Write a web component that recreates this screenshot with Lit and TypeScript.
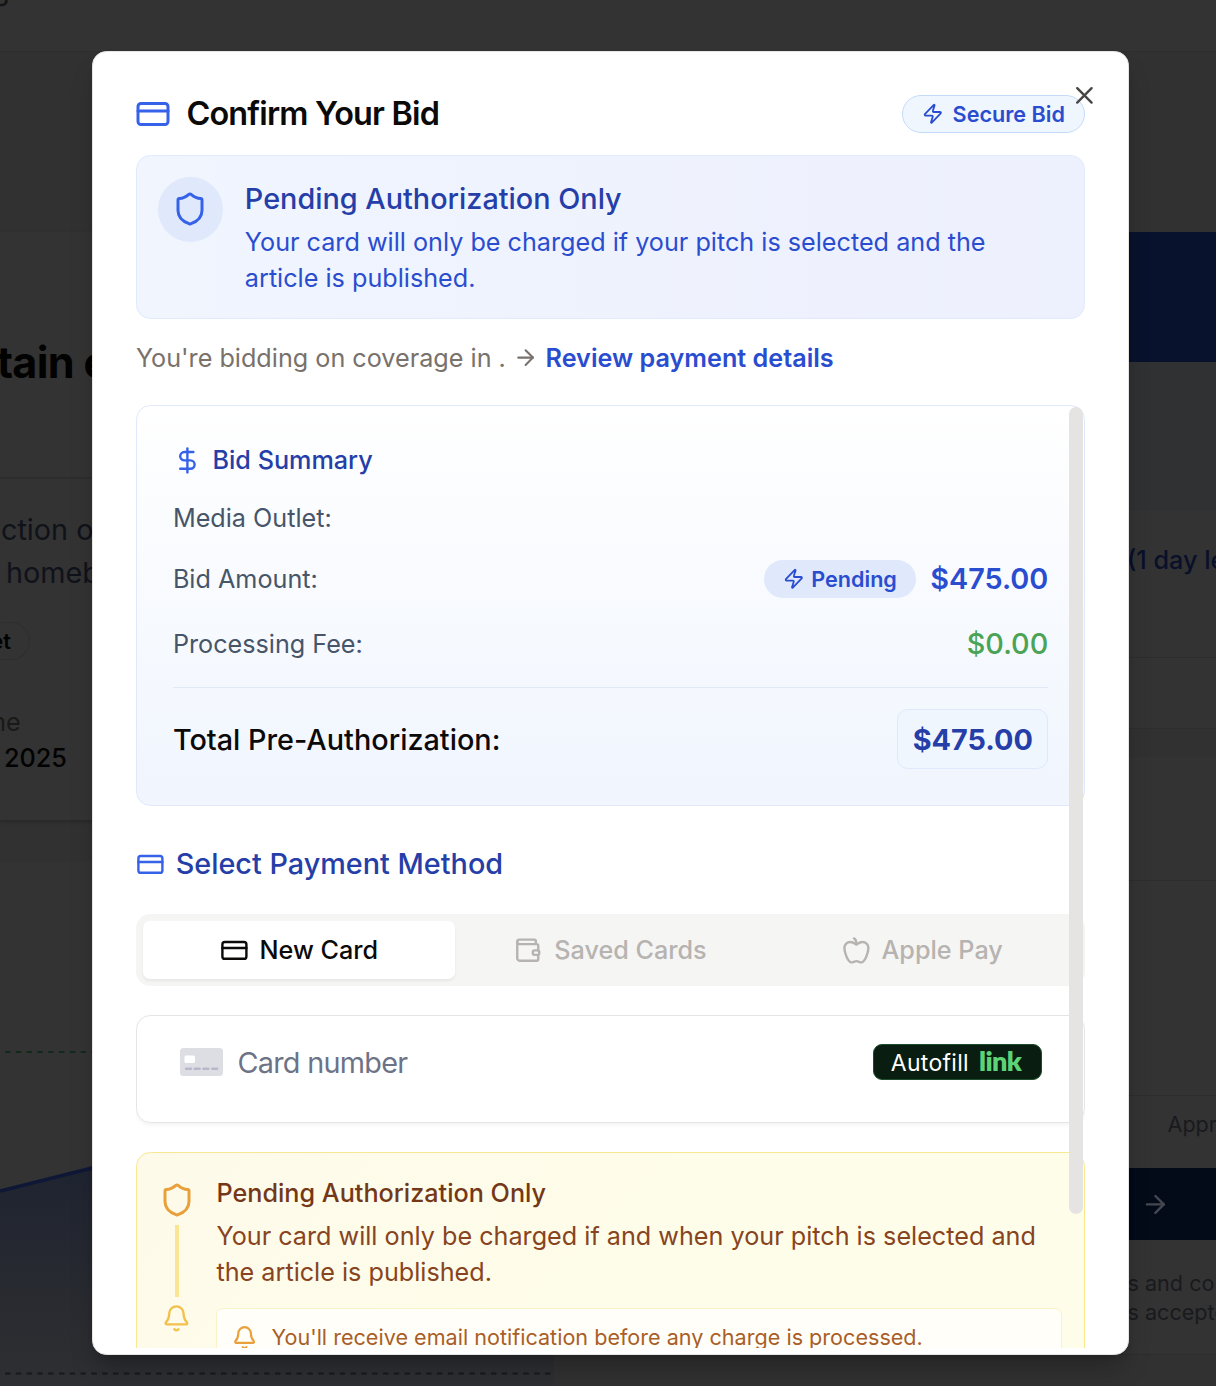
import { LitElement, html, css, svg, nothing } from "lit";
import { customElement, property } from "lit/decorators.js";

const ICONS: Record<string, unknown> = {
  card: svg`<rect width="20" height="14" x="2" y="5" rx="2"/><path d="M2 10h20"/>`,
  shield: svg`<path d="M20 13c0 5-3.5 7.5-7.66 8.95a1 1 0 0 1-.67-.01C7.5 20.5 4 18 4 13V6a1 1 0 0 1 1-1c2 0 4.5-1.2 6.24-2.72a1.17 1.17 0 0 1 1.52 0C14.51 3.81 17 5 19 5a1 1 0 0 1 1 1z"/>`,
  zap: svg`<path d="M4 14a1 1 0 0 1-.78-1.63l9.9-10.2a.5.5 0 0 1 .86.46l-1.92 6.02A1 1 0 0 0 13 10h7a1 1 0 0 1 .78 1.63l-9.9 10.2a.5.5 0 0 1-.86-.46l1.92-6.02A1 1 0 0 0 11 14z"/>`,
  x: svg`<path d="M18 6 6 18"/><path d="m6 6 12 12"/>`,
  arrow: svg`<path d="M5 12h14"/><path d="m12 5 7 7-7 7"/>`,
  dollar: svg`<path d="M12 2v20"/><path d="M17 5H9.5a3.5 3.5 0 0 0 0 7h5a3.5 3.5 0 0 1 0 7H6"/>`,
  wallet: svg`<path d="M18.200 6.800V4.200A1.200 1.200 0 0 0 17 3H4.600a1.900 1.900 0 0 0 0 3.800H19a1.200 1.200 0 0 1 1.200 1.200v4"/><path d="M2.700 5v13.600a2 2 0 0 0 2 2H19a1.200 1.200 0 0 0 1.200-1.200v-3.600"/><rect x="15.700" y="12" width="5.300" height="3.700" rx="1.300"/>`,
  apple: svg`<path d="M12 20.94c1.5 0 2.75 1.06 4 1.06 3 0 6-8 6-12.22A4.91 4.91 0 0 0 17 5c-2.22 0-4 1.44-5 2-1-.56-2.78-2-5-2a4.9 4.9 0 0 0-5 4.78C2 14 5 22 8 22c1.25 0 2.5-1.06 4-1.06Z"/><path d="M10 2c1 .5 2 2 2 5"/>`,
  bell: svg`<path d="M10.27 21a2 2 0 0 0 3.46 0"/><path d="M3.26 15.33A1 1 0 0 0 4 17h16a1 1 0 0 0 .74-1.67C19.41 13.96 18 12.5 18 8A6 6 0 0 0 6 8c0 4.5-1.41 5.96-2.74 7.33"/>`,
};

@customElement("ui-icon")
export class UiIcon extends LitElement {
  @property() name = "";
  @property({ type: Number }) size = 24;
  @property({ type: Number }) weight = 2;
  static styles = css`
    :host { display: inline-flex; flex: none; }
    svg { display: block; }
  `;
  render() {
    return html`<svg width=${this.size} height=${this.size} viewBox="0 0 24 24" fill="none"
      stroke="currentColor" stroke-width=${this.weight} stroke-linecap="round" stroke-linejoin="round">
      ${ICONS[this.name] ?? nothing}</svg>`;
  }
}

@customElement("listing-page")
export class ListingPage extends LitElement {
  static styles = css`
    :host { display: block; height: 1386px; background: #313131; overflow: hidden; }
    .bar { height: 52px; border-bottom: 1px solid #2e2e2e; background: #333; box-sizing: border-box; overflow: hidden;
      font-size: 29px; line-height: 36px; color: #141414; }
    .bar span { display: block; margin: -28px 0 0 -8px; }
    .cols { display: grid; grid-template-columns: 554px 1fr; column-gap: 66px; height: 1334px; }
    .left { display: flex; flex-direction: column; padding-top: 180px; }
    .article { height: 588px; box-sizing: border-box; background: #333; box-shadow: 0 2px 4px rgba(0,0,0,.2); white-space: nowrap; overflow: hidden; flex: none; }
    .headline { height: 247px; box-sizing: border-box; padding-top: 104px; border-bottom: 2px solid #2d2d2d;
      font-size: 43.2px; font-weight: 700; line-height: 52px; color: #020202; letter-spacing: -0.7px; }
    .headline span { margin-left: -3px; }
    .copy { padding-top: 29px; font-size: 28.8px; line-height: 43px; color: #10121a; }
    .copy div:first-child { padding-left: 1px; }
    .copy div:last-child { padding-left: 6px; }
    .pill { display: flex; align-items: center; justify-content: flex-end; width: 30px; height: 38px; margin-top: 28px; border: 1px solid #2e2e2e; border-left: 0;
      border-radius: 0 19px 19px 0; font-size: 21.6px; font-weight: 600; color: #020202; padding-right: 18px; box-sizing: border-box; }
    .meta { padding-top: 44px; font-size: 25.2px; line-height: 36px; color: #1a1918; }
    .meta div:first-child { margin-left: -16px; }
    .meta .date { color: #020202; font-weight: 500; padding-left: 4px; }
    .chartcard { margin-top: 42px; flex: 1; background: #333; min-height: 0; }
    .chartcard svg { display: block; }
    .right { display: flex; flex-direction: column; padding-top: 180px; overflow: hidden; }
    .banner { height: 130px; background: #09122c; flex: none; }
    .tint { height: 149px; background: #303133; flex: none; }
    .right > div { flex: none; box-sizing: border-box; padding-left: 508px; white-space: nowrap; }
    .right .left-time { height: 147px; background: #333; border-bottom: 1px solid #2d2d2d; font-size: 25.2px; font-weight: 500; line-height: 98px; color: #08102a; padding-left: 507px; }
    .gap1 { height: 71px; background: #333; border-bottom: 1px solid #2d2d2d; }
    .gap2 { height: 28px; background: #313131; }
    .gap3 { height: 124px; background: #333; border-bottom: 1px solid #2d2d2d; }
    .gap4 { height: 215px; background: #333; border-bottom: 1px solid #2d2d2d; }
    .right .appr { height: 72px; background: #333; font-size: 21.6px; line-height: 57px; color: #191a1d; padding-left: 547.500px; }
    .right .cta { height: 72px; background: #030a18; display: flex; align-items: center; padding-left: 521px; color: #454850; }
    .right .terms { height: 115px; background: #333; border-bottom: 1px solid #2d2d2d; padding: 29px 0 0 507.500px; font-size: 21.6px; line-height: 29px; color: #191a1d; }
  `;
  render() {
    return html`
      <div class="bar"><span>g</span></div>
      <div class="cols">
        <div class="left">
          <div class="article">
            <div class="headline"><span>tain e</span></div>
            <div class="copy"><div>ction o</div><div>homeb</div></div>
            <div class="pill">et</div>
            <div class="meta"><div>me</div><div class="date">2025</div></div>
          </div>
          <div class="chartcard">
            <svg width="554" height="524" viewBox="0 862 554 524">
              <defs><linearGradient id="fade" x1="0" y1="0" x2="0" y2="1">
                <stop offset="0" stop-color="#1a2133"/><stop offset=".35" stop-color="#1f2431"/><stop offset=".75" stop-color="#292b30"/><stop offset="1" stop-color="#2e2f32"/>
              </linearGradient></defs>
              <path d="M0 1191 92 1168 554 1060V1386H0Z" fill="url(#fade)"/>
              <path d="M0 1191 92 1168 554 1060" stroke="#0e1836" stroke-width="3.500" fill="none"/>
              <path d="M5 1052H554" stroke="#12291d" stroke-width="2" stroke-dasharray="5.4 5.4"/>
              <path d="M5 1373.500H554" stroke="#17181b" stroke-width="2" stroke-dasharray="5.4 5.4"/>
            </svg>
          </div>
        </div>
        <div class="right">
          <div class="banner"></div>
          <div class="tint"></div>
          <div class="left-time">(1 day left)</div>
          <div class="gap1"></div><div class="gap2"></div><div class="gap3"></div><div class="gap4"></div>
          <div class="appr">Appr</div>
          <div class="cta"><ui-icon name="arrow" size="28.8"></ui-icon></div>
          <div class="terms">s and co<br>s accepte</div>
        </div>
      </div>`;
  }
}

@customElement("bid-dialog")
export class BidDialog extends LitElement {
  static styles = css`
    :host { display: flex; flex-direction: column; position: relative; box-sizing: border-box; width: 1037px; height: 1304px;
      background: #fff; border: 1px solid #e7e5e4; border-radius: 14.4px; padding: 43px 42.800px 6px 43.200px;
      box-shadow: 0 18px 27px -5px rgba(0,0,0,.22), 0 7px 11px -7px rgba(0,0,0,.2); overflow: hidden;
      font-size: 25.2px; line-height: 36px; color: #0c0a09; }
    :host > * { flex: none; }
    .row { display: flex; align-items: center; }
    .between { display: flex; align-items: center; justify-content: space-between; }
    .head { height: 38px; }
    .title { gap: 15px; font-size: 32.4px; font-weight: 600; letter-spacing: -0.81px; }
    .title ui-icon { margin-left: -0.5px; }
    .blue6 { color: #3662e9; }
    .blue7 { color: #2a4dd0; }
    .secure { box-sizing: border-box; height: 38px; padding: 0 19px; gap: 9px; border: 1px solid #c3daf9; border-radius: 19px; background: #f0f6fe;
      color: #2a4dd0; font-size: 21.6px; font-weight: 600; }
    .close { position: absolute; right: 29px; top: 29px; color: #484746; }
    .notice { box-sizing: border-box; height: 164px; margin-top: 22px; display: flex; gap: 21.600px; padding: 21.6px; border: 1px solid #dfeafc;
      border-radius: 14.4px; background: linear-gradient(90deg, #f0f5fe, #edf0fd); color: #2a4dd0; }
    .disc { box-sizing: border-box; width: 64.8px; height: 64.8px; border-radius: 50%; background: #dfe9fb; display: flex; align-items: center; justify-content: center; flex: none; margin-top: -0.5px; padding-right: 1px; }
    .notice .body { width: 770px; padding-top: 3px; }
    .h { font-size: 28.8px; font-weight: 500; color: #253ea8; }
    .notice .h { line-height: 36px; margin-bottom: 7px; }
    .sub { margin-top: 21px; height: 36px; color: #78716c; white-space: pre; }
    .sub ui-icon { margin: 0 7px 0 7.500px; }
    .sub b { font-weight: 600; }
    .scroll { margin-top: 29px; flex: 1 1 0; min-height: 0; overflow: hidden; margin-right: -0.4px; }
    .summary { box-sizing: border-box; height: 401px; border: 1px solid #dfe9fb; border-radius: 14.4px; padding: 36px;
      background: linear-gradient(180deg, #fff, #f0f5fe); color: #475569; display: flex; flex-direction: column; }
    .summary .st { gap: 10.8px; color: #253ea8; font-weight: 500; height: 36px; }
    .r1 { height: 36px; margin-top: 22px; }
    .r2 { height: 38px; margin-top: 24px; }
    .r3 { box-sizing: content-box; height: 43px; margin-top: 24px; padding-bottom: 22px; border-bottom: 1px solid #dfe9f8; }
    .pending { height: 38px; padding: 0 19px; gap: 7px; border-radius: 19px; background: #dfe9fb; font-size: 21.6px; font-weight: 600; margin-right: 14.400px; }
    .amount { font-size: 28.8px; font-weight: 600; }
    .fee { font-size: 28.8px; font-weight: 500; color: #4ba356; }
    .total { margin-top: 21px; height: 60px; font-size: 28.8px; font-weight: 500; color: #0c0a09; }
    .total > span:first-child { padding-top: 2px; }
    .totalbox { box-sizing: border-box; height: 60px; display: flex; align-items: center; padding: 2px 14.4px 0; border: 1px solid #dfe9fb; border-radius: 10.8px; background: #f0f6fe;
      font-weight: 700; color: #253ea8; }
    .method { margin-top: 38px; height: 40px; gap: 11px; }
    .tabs { box-sizing: border-box; margin-top: 30px; height: 72px; display: grid; grid-template-columns: repeat(3, 1fr); padding: 7.2px; border-radius: 14.4px; background: #f5f5f4; }
    .tab { display: flex; align-items: center; justify-content: center; gap: 11px; font-weight: 500; color: #b6b3b0; }
    .tab.on { background: #fff; color: #0c0a09; border-radius: 7px; box-shadow: 0 2px 3px rgba(0,0,0,.06); }
    .field { box-sizing: border-box; margin-top: 29px; height: 108px; border: 1px solid #e5e5e7; border-radius: 14.4px; box-shadow: 0 2px 4px rgba(0,0,0,.05);
      display: flex; align-items: flex-start; padding: 28px 42.500px 28px 43px; }
    .field svg { margin-top: 4px; flex: none; display: block; }
    .ph { flex: 1; margin-left: 14.500px; font-size: 28.8px; color: #6d7386; letter-spacing: -0.7px; line-height: 38px; }
    .autofill { box-sizing: border-box; height: 36px; width: 169px; display: flex; align-items: center; padding-left: 17px; gap: 10px; border: 1px solid #1c4d2c; border-radius: 9px;
      background: #0a1d11; color: #fff; font-size: 23px; letter-spacing: 0.3px; }
    .autofill span:first-child { padding-top: 1px; }
    .linkmark { font-family: Lato, sans-serif; font-weight: 800; font-size: 27px; color: #5cd377; letter-spacing: -0.6px; position: relative; top: -1px; }
    .warn { box-sizing: border-box; margin-top: 29px; height: 260px; border: 1px solid #fae792; border-radius: 14.4px; background: linear-gradient(135deg, #fefaea, #fefde9 50%);
      display: flex; gap: 21.6px; padding: 22px 22px; color: #884420; }
    .rail { width: 36px; display: flex; flex-direction: column; align-items: center; padding-top: 7px; }
    .rail i { width: 4px; height: 72px; margin: 7px 0; background: #f9e594; }
    .amber5 { color: #e9a03b; }
    .amber4 { color: #f2c14b; }
    .warn .body { flex: 1; }
    .wt { font-weight: 500; color: #743818; margin-bottom: 7px; }
    .mail { box-sizing: border-box; height: 80px; margin-top: 18px; padding: 10px 14.4px; border: 1px solid #fcf2c9; border-radius: 7px; background: #fffef8;
      display: flex; align-items: flex-start; gap: 14.4px; color: #a95e28; font-size: 21.6px; }
    .mail ui-icon { margin-top: 6px; }
    .thumb { position: absolute; right: 45.200px; top: 354.500px; width: 14px; height: 807px; border-radius: 7px; background: #e6e4e3; }
  `;
  render() {
    return html`
      <div class="between head">
        <div class="row title"><ui-icon class="blue6" name="card" size="36"></ui-icon><span>Confirm Your Bid</span></div>
        <div class="row secure"><ui-icon name="zap" size="21.6"></ui-icon><span>Secure Bid</span></div>
      </div>
      <ui-icon class="close" name="x" size="28.8"></ui-icon>
      <div class="notice">
        <div class="disc"><ui-icon class="blue6" name="shield" size="36"></ui-icon></div>
        <div class="body">
          <div class="h">Pending Authorization Only</div>
          <div>Your card will only be charged if your pitch is selected and the article is published.</div>
        </div>
      </div>
      <div class="row sub"><span>You're bidding on coverage in .</span><ui-icon name="arrow" size="25.2"></ui-icon><b class="blue7">Review payment details</b></div>
      <div class="scroll">
        <div class="summary">
          <div class="row st"><ui-icon class="blue6" name="dollar" size="28.8"></ui-icon><span>Bid Summary</span></div>
          <div class="between r1"><span>Media Outlet:</span></div>
          <div class="between r2"><span>Bid Amount:</span>
            <div class="row blue7"><div class="row pending"><ui-icon name="zap" size="21.6"></ui-icon><span>Pending</span></div><span class="amount">$475.00</span></div></div>
          <div class="between r3"><span>Processing Fee:</span><span class="fee">$0.00</span></div>
          <div class="between total"><span>Total Pre-Authorization:</span><span class="totalbox">$475.00</span></div>
        </div>
        <div class="row method"><ui-icon class="blue6" name="card" size="28.8"></ui-icon><span class="h">Select Payment Method</span></div>
        <div class="tabs">
          <div class="tab on"><ui-icon name="card" size="28.8"></ui-icon><span>New Card</span></div>
          <div class="tab"><ui-icon name="wallet" size="28.8"></ui-icon><span>Saved Cards</span></div>
          <div class="tab"><ui-icon name="apple" size="28.8"></ui-icon><span>Apple Pay</span></div>
        </div>
        <div class="field">
          <svg width="43" height="28" viewBox="0 0 43 28"><rect width="43" height="28" rx="3.500" fill="#dddee4"/><rect x="4.500" y="7.500" width="10.500" height="7.500" rx="1.500" fill="#fff"/>
            <path d="M6 20.700h5M14.700 20.700h5M23.400 20.700h5M32.200 20.700h5" stroke="#b7b9cb" stroke-width="2.400" stroke-linecap="round"/></svg>
          <span class="ph">Card number</span>
          <div class="autofill"><span>Autofill</span><span class="linkmark">link</span></div>
        </div>
        <div class="warn">
          <div class="rail"><ui-icon class="amber5" name="shield" size="36"></ui-icon><i></i><ui-icon class="amber4" name="bell" size="28.8"></ui-icon></div>
          <div class="body">
            <div class="wt">Pending Authorization Only</div>
            <div>Your card will only be charged if and when your pitch is selected and the article is published.</div>
            <div class="mail"><ui-icon class="amber5" name="bell" size="25.2"></ui-icon><span>You'll receive email notification before any charge is processed.</span></div>
          </div>
        </div>
      </div>
      <div class="thumb"></div>`;
  }
}

@customElement("app-root")
export class AppRoot extends LitElement {
  static styles = css`
    :host { display: block; position: relative; width: 1216px; height: 1386px; overflow: hidden; font-family: Inter, "Liberation Sans", sans-serif; }
    .modal { position: absolute; left: 91.700px; top: 51px; }
  `;
  render() {
    return html`<listing-page></listing-page><bid-dialog class="modal"></bid-dialog>`;
  }
}
